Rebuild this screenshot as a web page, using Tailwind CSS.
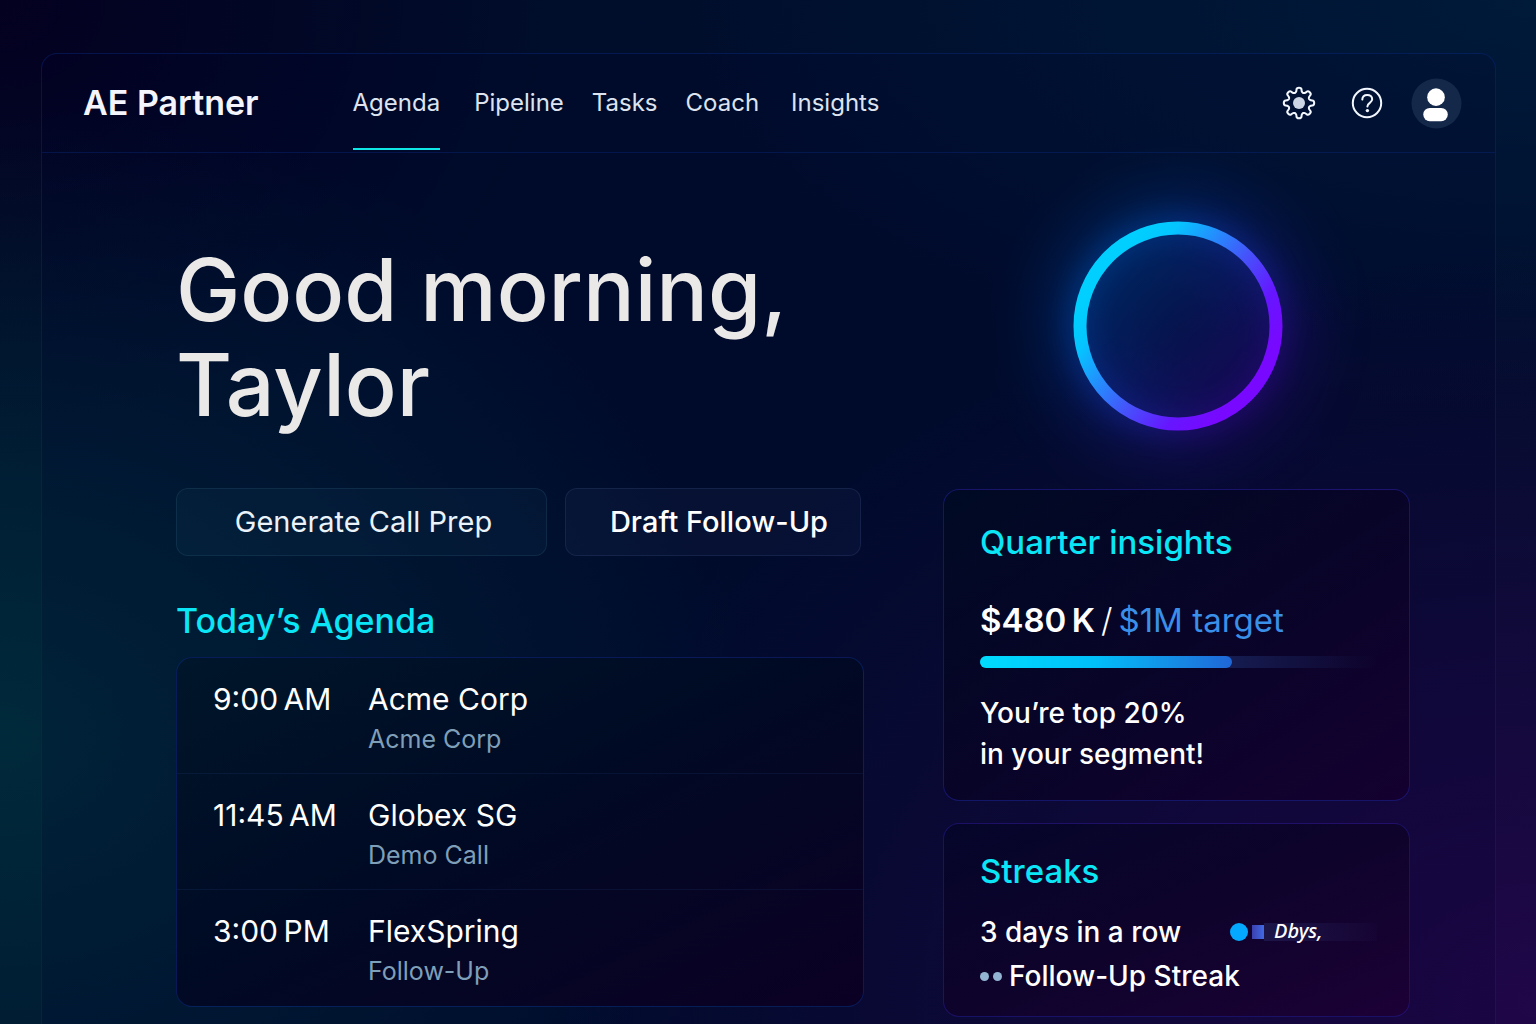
<!DOCTYPE html>
<html lang="en">
<head>
<meta charset="utf-8">
<meta name="viewport" content="width=device-width, initial-scale=1">
<title>AE Partner</title>
<script src="https://cdn.jsdelivr.net/npm/@tailwindcss/browser@4"></script>
</head>
<body class="bg-[#000d2b] font-['Inter','Liberation_Sans',sans-serif] text-white">
<div class="flex min-h-screen flex-col overflow-hidden bg-[radial-gradient(ellipse_50%_62%_at_0%_72%,#002a3b_0%,#002a3b00_100%),radial-gradient(ellipse_66%_75%_at_100%_98%,#200748_0%,#20074800_100%),radial-gradient(ellipse_36%_46%_at_0%_0%,#040020_0%,#04002000_100%),radial-gradient(ellipse_60%_40%_at_100%_0%,#001a3a_0%,#001a3a00_100%)] pt-[53px] pr-10 pl-[41px]">
  <div class="flex grow flex-col rounded-t-2xl border border-b-0 border-[#0a2a80]/45 bg-[#00002c]/15">
    <header class="flex h-[99px] items-center border-b border-[#0a2a80]/40 pr-[33px] pl-[41px]">
      <a href="#" class="text-[34px] leading-10 font-semibold whitespace-nowrap text-[#f4f4fc]">AE Partner</a>
      <nav aria-label="Main" class="ml-[94px] flex h-full gap-7 text-2xl text-[#dde4f0]">
        <a href="#" aria-current="page" class="mr-1.5 mb-0.5 flex items-center border-b-2 border-[#0fe6e6] pt-1">Agenda</a>
        <a href="#" class="flex items-center">Pipeline</a>
        <a href="#" class="flex items-center">Tasks</a>
        <a href="#" class="flex items-center">Coach</a>
        <a href="#" class="ml-1 flex items-center">Insights</a>
      </nav>
      <div class="ml-auto flex items-center">
        <button type="button" aria-label="Settings" class="mr-[35px]">
          <svg class="size-[34px]" viewBox="-17 -17 34 34" fill="none" stroke="#f3f7ff" stroke-width="2" stroke-linejoin="round">
            <path id="gear"/>
            <circle r="6" fill="#cdd6e4" stroke="none"/>
          </svg>
        </button>
        <button type="button" aria-label="Help" class="mr-7">
          <svg class="size-8" viewBox="0 0 32 32" fill="none" stroke="#f3f7ff" stroke-width="2" stroke-linecap="round" stroke-linejoin="round">
            <circle cx="16" cy="16" r="14.2"/>
            <path d="M11.300 12.600c.1-2.900 2-4.700 4.900-4.700s5 1.800 5 4.400c0 3.600-4.800 3.500-4.800 7.100"/>
            <circle cx="16.400" cy="23.600" r="1.700" fill="#f3f7ff" stroke="none"/>
          </svg>
        </button>
        <button type="button" aria-label="Account">
          <svg class="size-[51px]" viewBox="0 0 52 52">
            <circle cx="26" cy="26" r="25.500" fill="#14294a"/>
            <circle cx="25.500" cy="19.500" r="9" fill="#fff"/>
            <rect x="12.500" y="30.500" width="25" height="13.500" rx="6.700" fill="#fff"/>
          </svg>
        </button>
      </div>
    </header>

    <main class="grid grid-cols-[minmax(0,688fr)_minmax(0,467fr)] items-start gap-x-[79px] pr-[85px] pb-1 pl-[134px]">
      <section class="pt-[90px]">
        <h1 class="text-[86px] leading-[95px] font-medium text-[#ebe9e8]">Good morning,<br>Taylor</h1>
        <div class="mt-[55px] flex gap-[18px]">
          <button type="button" class="h-[68px] w-[371px] rounded-xl border border-[#3c6e8c]/20 bg-[#1e5a78]/10 pl-1 text-[29px] text-[#eaf2fa]">Generate Call Prep</button>
          <button type="button" class="h-[68px] w-[296px] rounded-xl border border-[#50649b]/20 bg-[#3c5082]/10 pl-3 text-[29px] font-medium">Draft Follow-Up</button>
        </div>
        <h2 class="mt-[43px] text-[34px] leading-[44px] font-medium text-[#0be6f6]">Today’s Agenda</h2>
        <ul class="mt-3.5 rounded-2xl border border-[#0c2f8c]/50 bg-linear-to-br from-[#00162a] via-[#000a24] via-45% to-[#0b0024] text-[30px] leading-10">
          <li class="flex h-[116px] border-b border-[#32509b]/15 pt-[21px] pl-9">
            <time class="w-[155px] shrink-0">9:00&#8201;AM</time>
            <div><h3>Acme Corp</h3><p class="text-[25px] text-[#7f9fb8]">Acme Corp</p></div>
          </li>
          <li class="flex h-[116px] border-b border-[#32509b]/15 pt-[21px] pl-9">
            <time class="w-[155px] shrink-0">11:45&#8201;AM</time>
            <div><h3>Globex SG</h3><p class="text-[25px] text-[#7f9fb8]">Demo Call</p></div>
          </li>
          <li class="flex h-[116px] pt-[21px] pl-9">
            <time class="w-[155px] shrink-0">3:00&#8201;PM</time>
            <div><h3>FlexSpring</h3><p class="text-[25px] text-[#7f9fb8]">Follow-Up</p></div>
          </li>
        </ul>
      </section>

      <aside class="flex flex-col">
        <div class="flex h-[336px] justify-center pt-[68px] pl-0.5">
          <svg class="size-[210px] overflow-visible" viewBox="0 0 210 210" fill="none" role="img" aria-label="Quarter progress ring">
            <defs>
              <linearGradient id="ring" x1="35" y1="50" x2="175" y2="160" gradientUnits="userSpaceOnUse">
                <stop offset="0" stop-color="#00cfff"/>
                <stop offset=".15" stop-color="#05c4ff"/>
                <stop offset=".55" stop-color="#4455fa"/>
                <stop offset=".8" stop-color="#6616ff"/>
                <stop offset="1" stop-color="#7808ff"/>
              </linearGradient>
              <linearGradient id="halo" x1="35" y1="50" x2="175" y2="160" gradientUnits="userSpaceOnUse">
                <stop offset="0" stop-color="#0070f0"/>
                <stop offset=".5" stop-color="#2040f0"/>
                <stop offset="1" stop-color="#4a08c0"/>
              </linearGradient>
              <filter id="soft" x="-60%" y="-60%" width="220%" height="220%" color-interpolation-filters="sRGB"><feGaussianBlur stdDeviation="14"/></filter>
              <filter id="wide" x="-100%" y="-100%" width="300%" height="300%" color-interpolation-filters="sRGB"><feGaussianBlur stdDeviation="36"/></filter>
            </defs>
            <circle cx="105" cy="105" r="96" fill="url(#halo)" fill-opacity=".45" stroke="url(#halo)" stroke-width="50" opacity=".34" filter="url(#wide)"/>
            <circle cx="105" cy="105" r="99" stroke="url(#halo)" stroke-width="16" opacity=".36" filter="url(#soft)"/>
            <circle cx="105" cy="105" r="98" stroke="url(#ring)" stroke-width="13"/>
          </svg>
        </div>

        <section class="h-[312px] rounded-2xl border border-[#2323a0]/55 bg-linear-to-br from-[#000a24] via-[#080428] via-50% to-[#140030] pt-[30px] pr-8 pl-9">
          <h2 class="text-[33px] leading-[44px] font-medium text-[#0be6f6]">Quarter insights</h2>
          <p class="mt-[34px] text-[33px] leading-[44px] whitespace-nowrap"><strong class="font-semibold">$480&#8201;K</strong>&#8201;<span class="font-light">/</span>&#8201;<span class="text-[#3a8fe8]">$1M target</span></p>
          <div role="progressbar" aria-label="Quarter target" aria-valuenow="480" aria-valuemin="0" aria-valuemax="1000" class="mt-3.5 h-3 rounded-full bg-linear-to-r from-[#1c2a66]/70 from-60% to-[#1c2a66]/0">
            <div class="h-full rounded-full bg-linear-to-r from-[#00dcff] via-[#00c0fa] via-45% to-[#1f66d6]" style="width:63.500%"></div>
          </div>
          <p class="mt-[25px] text-[28px] leading-[41px] font-medium">You’re top 20%<br>in your segment!</p>
        </section>

        <section class="mt-[22px] h-[194px] rounded-2xl border border-[#2a1ea0]/50 bg-linear-to-br from-[#05052a] via-[#0e032b] via-50% to-[#1c0036] pt-[25px] pr-8 pl-9">
          <h2 class="text-[33px] leading-[44px] font-medium text-[#0be6f6]">Streaks</h2>
          <div class="mt-[17px] flex items-center justify-between">
            <p class="text-[28px] leading-[44px] font-medium whitespace-nowrap">3 days in a row</p>
            <div class="flex h-[18px] w-[147px] items-center">
              <span class="size-[18px] rounded-full bg-[#04a9ff]"></span>
              <span class="ml-1 h-3.5 w-3 bg-linear-to-r from-[#3b3fae] to-[#3f6ae6]"></span>
              <span class="flex h-[18px] grow items-center bg-linear-to-r from-[#2c3270]/40 to-[#2c3270]/5 pb-0.5 pl-2.5 font-['Noto_Sans',sans-serif] text-xl leading-[18px] font-medium text-white italic">Dbys,</span>
            </div>
          </div>
          <p class="flex items-center text-[28px] leading-[44px] font-medium whitespace-nowrap">
            <span class="size-[9px] rounded-full bg-[#93b4d2]"></span>
            <span class="mr-[7px] ml-1 size-[9px] rounded-full bg-[#93b4d2]"></span>
            Follow-Up Streak
          </p>
        </section>
      </aside>
    </main>
  </div>
</div>
<script>
  // Eight-toothed gear outline, smoothed through midpoints
  const pts = [];
  for (let i = 0; i < 8; i++) {
    const a = i * Math.PI / 4 - Math.PI / 2;
    [[-.36, 10.8], [-.22, 11.8], [-.16, 15.4], [.16, 15.4], [.22, 11.8], [.36, 10.8]].forEach(([d, r]) =>
      pts.push([r * Math.cos(a + d), r * Math.sin(a + d)]));
  }
  const mid = (p, q) => ((p[0] + q[0]) / 2).toFixed(2) + ' ' + ((p[1] + q[1]) / 2).toFixed(2);
  let d = 'M' + mid(pts[pts.length - 1], pts[0]);
  pts.forEach((p, i) => { d += 'Q' + p[0].toFixed(2) + ' ' + p[1].toFixed(2) + ' ' + mid(p, pts[(i + 1) % pts.length]); });
  document.getElementById('gear').setAttribute('d', d + 'Z');
</script>
</body>
</html>
